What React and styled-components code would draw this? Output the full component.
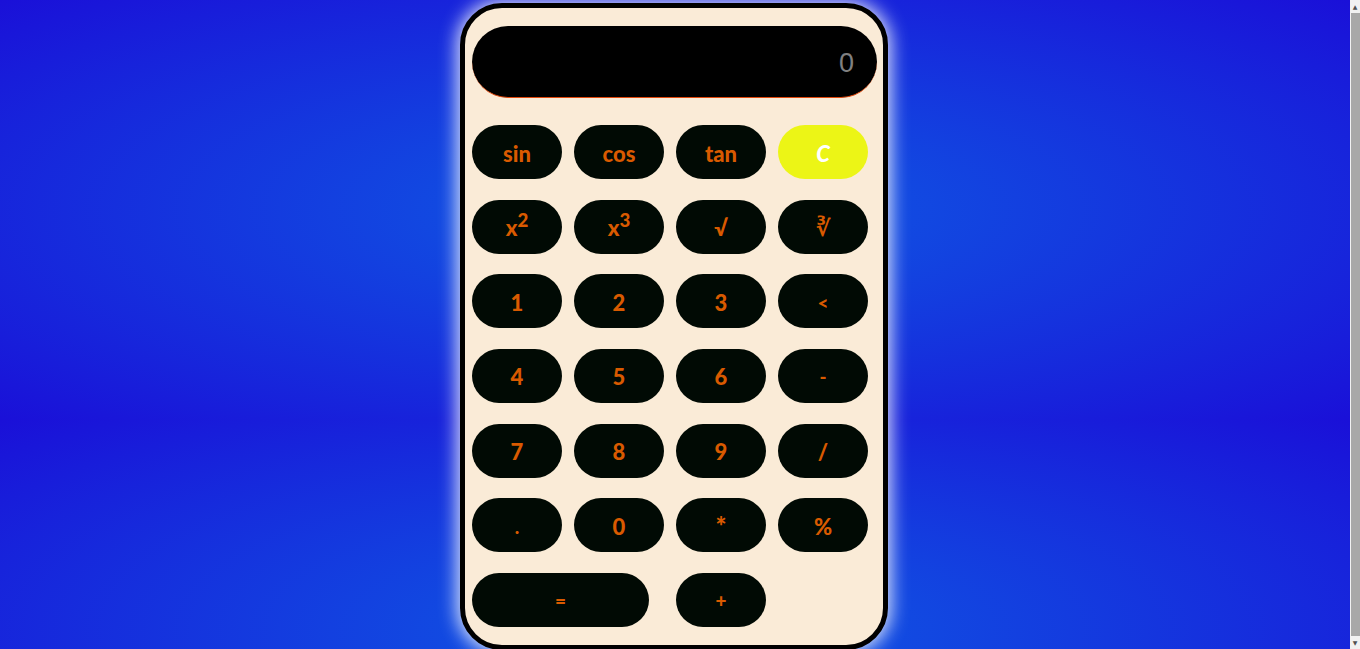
import styled, { createGlobalStyle } from 'styled-components'
import React, { Component } from 'react'

const keys = [
    { label: 'sin' }, { label: 'cos' }, { label: 'tan' }, { label: 'C', clear: true },
    { label: <span>x<sup>2</sup></span> }, { label: <span>x<sup>3</sup></span> }, { label: '√' }, { label: '∛' },
    { label: '1' }, { label: '2' }, { label: '3' }, { label: '<', small: true },
    { label: '4' }, { label: '5' }, { label: '6' }, { label: '-', small: true },
    { label: '7' }, { label: '8' }, { label: '9' }, { label: '/' },
    { label: '.', small: true }, { label: '0' }, { label: '*', mid: true }, { label: '%' },
]

class App extends Component
{
    constructor()
    {
        super();
        this.state = {
            value: "0"
        };
    }

    render()
    {
        var { value } = this.state;

        return (
            <Page>
                <GlobalStyle />
                <Calculator>
                    <Display>{value}</Display>
                    <Keypad>
                        {keys.map((k, i) => (
                            <Key key={i} $clear={k.clear} $small={k.small} $mid={k.mid}>{k.label}</Key>
                        ))}
                        <Key $wide $small>=</Key>
                        <Key $small>+</Key>
                    </Keypad>
                </Calculator>
                <ScrollTrack>
                    <ScrollArrow>▲</ScrollArrow>
                    <ScrollThumb />
                    <ScrollArrow>▼</ScrollArrow>
                </ScrollTrack>
            </Page>
        )
    }
}

export default App

const GlobalStyle = createGlobalStyle`
  html {
    background: radial-gradient(ellipse farthest-corner, #0f5be4 0%, #1a10d8 100%);
    background-size: 1350px 420px;
    background-repeat: repeat-y;
  }
  body {
    margin: 0;
    font-family: Lato, "DejaVu Sans", sans-serif;
  }
  * {
    box-sizing: border-box;
  }
`

const Page = styled.div`
  display: flex;
  justify-content: center;
  padding: 3px 10px 3px 0;
`

const Calculator = styled.div`
  width: 428px;
  height: 647px;
  margin-right: 2px;
  background-color: #faebd7;
  border: 5px solid #000;
  border-radius: 42px;
  box-shadow: 0 0 18px 3px rgba(255, 255, 255, 0.85);
  padding: 18px 6px 0 7px;
  display: flex;
  flex-direction: column;
`

const Display = styled.div`
  width: 405px;
  height: 72px;
  border-radius: 36px;
  background-color: #000;
  border-bottom: 1px solid #e2480c;
  display: flex;
  align-items: center;
  justify-content: flex-end;
  padding: 4px 23px 0 0;
  color: #808080;
  font-family: "Liberation Sans", Arial, sans-serif;
  font-size: 27px;
`

const Key = styled.button`
  width: ${p => p.$wide ? '177px' : '90px'};
  grid-column: ${p => p.$wide ? 'span 2' : 'auto'};
  height: 54px;
  border: none;
  border-radius: 27px;
  background-color: ${p => p.$clear ? '#ecf516' : '#010a04'};
  color: ${p => p.$clear ? '#ffffff' : '#d95a00'};
  font-family: Lato, "DejaVu Sans", sans-serif;
  font-weight: 900;
  font-size: ${p => p.$small ? '19px' : p.$mid ? '26px' : '22px'};
  font-style: ${p => p.$clear ? 'italic' : 'normal'};
  padding: 2px 0 0;
  cursor: pointer;
  display: flex;
  align-items: center;
  justify-content: center;

  sup {
    font-size: 0.85em;
    vertical-align: 0.5em;
    line-height: 0;
  }
`

const Keypad = styled.div`
  margin-top: 27px;
  display: grid;
  grid-template-columns: repeat(4, 90px);
  grid-auto-rows: 54px;
  column-gap: 12px;
  row-gap: 20.67px;
`

const ScrollTrack = styled.div`
  position: fixed;
  top: 0;
  right: 0;
  width: 10px;
  height: 100vh;
  background-color: #f1f1f1;
  display: flex;
  flex-direction: column;
  align-items: center;
`

const ScrollArrow = styled.div`
  height: 13px;
  width: 100%;
  color: #505050;
  font-size: 6px;
  line-height: 13px;
  text-align: center;
  font-family: "DejaVu Sans", sans-serif;
`

const ScrollThumb = styled.div`
  flex: 1;
  width: 9px;
  margin-left: 1px;
  background-color: #a8a8a8;
`
